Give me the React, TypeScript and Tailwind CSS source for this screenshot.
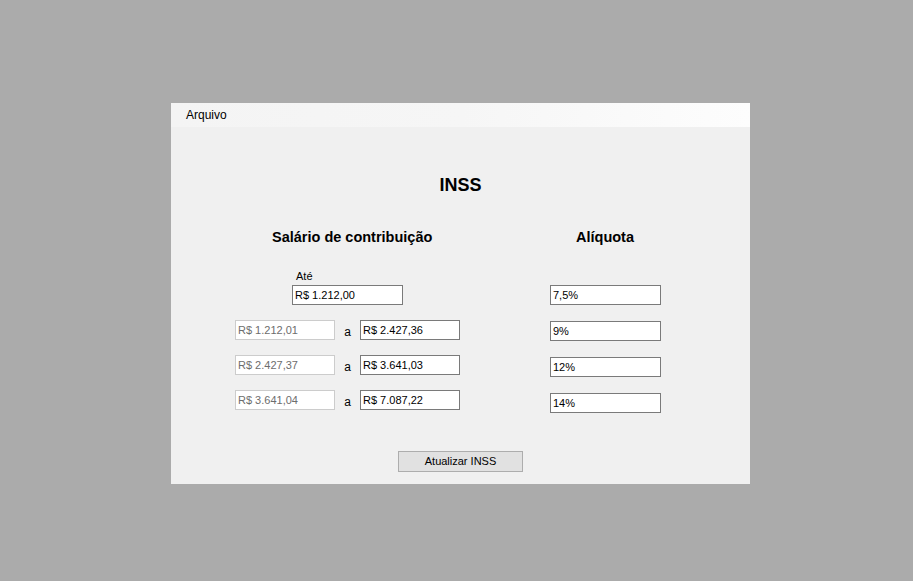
const font = { fontFamily: '"Liberation Sans", Arial, sans-serif' };

const TextBox = ({ value, width, disabled }: { value: string; width: string; disabled?: boolean }) => (
  <div
    className={`${width} h-[20px] bg-white border flex items-center pl-[2px] text-[11px] leading-none ${
      disabled ? 'border-[#cccccc] text-[#6d6d6d]' : 'border-[#7a7a7a] text-black'
    }`}
  >
    {value}
  </div>
);

const faixas = [
  { de: 'R$ 1.212,01', ate: 'R$ 2.427,36' },
  { de: 'R$ 2.427,37', ate: 'R$ 3.641,03' },
  { de: 'R$ 3.641,04', ate: 'R$ 7.087,22' },
];

const aliquotas = ['7,5%', '9%', '12%', '14%'];

export default function App() {
  return (
    <div className="w-[913px] h-[581px] bg-[#ababab] pt-[103px] pl-[171px]" style={font}>
      <div className="w-[579px] h-[381px] bg-[#f0f0f0] flex flex-col">
        {/* Menu */}
        <div className="h-[24px] bg-gradient-to-r from-[#f4f4f4] via-[#f6f6f6] to-[#fdfdfd] flex items-center pl-[15px] text-[12px] text-black">
          Arquivo
        </div>

        {/* Title */}
        <h1 className="mt-[49px] text-center text-[18px] leading-[18px] font-bold text-black">INSS</h1>

        {/* Headings */}
        <div className="mt-[36px] flex pl-[101px] text-[14.5px] leading-[15px] font-bold text-black">
          <div className="w-[304px]">Salário de contribuição</div>
          <div>Alíquota</div>
        </div>

        {/* Fields */}
        <div className="mt-[25px] flex items-start pl-[64px]">
          <div className="w-[225px] flex flex-col">
            <div className="pl-[61px] text-[11px] leading-[13px] text-black">Até</div>
            <div className="mt-[2px] pl-[57px]">
              <TextBox value="R$ 1.212,00" width="w-[111px]" />
            </div>
            <div className="mt-[15px] flex flex-col gap-[15px]">
              {faixas.map((f) => (
                <div key={f.de} className="flex items-center">
                  <TextBox value={f.de} width="w-[100px]" disabled />
                  <div className="w-[25px] text-center text-[12px] leading-none text-black pt-[3px]">a</div>
                  <TextBox value={f.ate} width="w-[100px]" />
                </div>
              ))}
            </div>
          </div>
          <div className="ml-[90px] mt-[15px] flex flex-col gap-[16px]">
            {aliquotas.map((a) => (
              <TextBox key={a} value={a} width="w-[111px]" />
            ))}
          </div>
        </div>

        {/* Button */}
        <div className="mt-[38px] flex justify-center">
          <button className="w-[125px] h-[21px] bg-[#e1e1e1] border border-[#adadad] text-[11px] leading-none text-black">
            Atualizar INSS
          </button>
        </div>
      </div>
    </div>
  );
}
